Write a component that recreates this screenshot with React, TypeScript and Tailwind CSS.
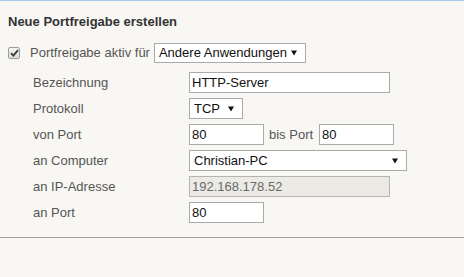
import React from 'react';

const Caret: React.FC = () => (
  <svg width="6" height="6" viewBox="0 0 6 6" className="ml-[4px] shrink-0">
    <path d="M0 0.5 H6 L3 5.5 Z" fill="#111" />
  </svg>
);

const Field: React.FC<{ value: string; width: string; disabled?: boolean }> = ({ value, width, disabled }) => (
  <div
    className={`flex h-[21px] items-center border px-[2px] text-[13px] ${width} ${
      disabled ? 'border-[#b4b4b0] bg-[#ebeae5] text-[#6a6a6a]' : 'border-[#aaaaaa] bg-white text-[#111]'
    }`}
  >
    {value}
  </div>
);

const Select: React.FC<{ value: string; width: string; height?: string }> = ({ value, width, height = 'h-[21px]' }) => (
  <div
    className={`flex ${height} ${width} items-center justify-between border border-[#aaaaaa] bg-white pl-[4px] pr-[8px] text-[13px] text-[#111]`}
  >
    <span className="whitespace-nowrap">{value}</span>
    <Caret />
  </div>
);

const Row: React.FC<{ label: string; children: React.ReactNode }> = ({ label, children }) => (
  <div className="flex h-[21px] items-center">
    <span className="w-[156px] shrink-0 text-[13px] text-[#555555]">{label}</span>
    {children}
  </div>
);

export default function App() {
  return (
    <div className="h-[277px] w-[464px] overflow-hidden border-t border-[#a7c9ea] bg-[#f8f7f3] font-['Liberation_Sans',Arial,sans-serif] leading-4">
      <h2 className="pl-2 pt-[13px] text-[13px] font-bold text-[#333333]">Neue Portfreigabe erstellen</h2>

      <div className="mt-[13px] flex h-[20px] items-center pl-2">
        <div className="flex h-[12px] w-[12px] items-center justify-center rounded-[2px] border border-[#9c9c9c] bg-gradient-to-b from-[#f4f4f4] to-[#dcdcdc]">
          <svg width="9" height="8" viewBox="0 0 9 8">
            <path d="M1 4.2 L3.4 6.6 L8 1.2" fill="none" stroke="#3a3a3a" strokeWidth="1.8" />
          </svg>
        </div>
        <span className="ml-[10px] mr-[4px] text-[13px] text-[#555555]">Portfreigabe aktiv für</span>
        <Select value="Andere Anwendungen" width="w-[152px]" height="h-[20px]" />
      </div>

      <div className="mt-[9px] flex flex-col gap-[5px] pl-[33px]">
        <Row label="Bezeichnung">
          <Field value="HTTP-Server" width="w-[201px]" />
        </Row>
        <Row label="Protokoll">
          <Select value="TCP" width="w-[54px]" />
        </Row>
        <Row label="von Port">
          <Field value="80" width="w-[75px]" />
          <span className="ml-[5px] mr-[6px] text-[13px] text-[#555555]">bis Port</span>
          <Field value="80" width="w-[75px]" />
        </Row>
        <Row label="an Computer">
          <Select value="Christian-PC" width="w-[218px]" />
        </Row>
        <Row label="an IP-Adresse">
          <Field value="192.168.178.52" width="w-[201px]" disabled />
        </Row>
        <Row label="an Port">
          <Field value="80" width="w-[75px]" />
        </Row>
      </div>

      <div className="mt-[14px] border-t border-[#a3a3a3]" />
    </div>
  );
}
